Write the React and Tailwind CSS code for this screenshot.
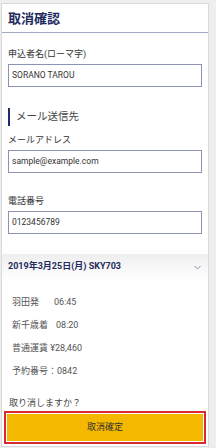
import React from 'react';

const font = "font-['Roboto','Noto_Sans_CJK_JP',sans-serif]";

const Field = ({ label, value, className = "" }) => (
  <div className={className}>
    <p className="text-[9px] leading-[12px] text-[#333333]">{label}</p>
    <div className="mt-[4px] h-[23px] border border-[#8d93b4] bg-white flex items-center px-[3px] text-[8.5px] text-[#333333]">
      {value}
    </div>
  </div>
);

const App = () => {
  return (
    <div className={`w-[216px] h-[448px] bg-[#eeeeee] pt-[3px] pl-[1px] pr-[7px] pb-[1px] ${font}`}>
      <div className="h-full bg-white border border-[#d9d9d9] flex flex-col">
        {/* Header */}
        <div className="h-[29px] flex items-center px-[6px] border-b border-[#a3a8c2]">
          <h1 className="text-[13px] font-bold text-[#1f2b5e] leading-none">取消確認</h1>
        </div>

        {/* Form */}
        <div className="px-[6px]">
          <Field className="mt-[15px]" label="申込者名(ローマ字)" value="SORANO TAROU" />

          <div className="mt-[21px] h-[18px] border-l-2 border-[#1f2b6e] pl-[6px] flex items-center">
            <span className="text-[10.5px] text-[#444444]">メール送信先</span>
          </div>

          <Field className="mt-[8px]" label="メールアドレス" value="sample@example.com" />
          <Field className="mt-[22px]" label="電話番号" value="0123456789" />
        </div>

        {/* Flight */}
        <div className="mt-[20px] h-[26px] flex items-center justify-between px-[6px] bg-gradient-to-b from-[#eeeeee] to-white">
          <span className="text-[9px] font-bold text-[#1f2b5e]">2019年3月25日(月) SKY703</span>
          <svg width="7" height="5" viewBox="0 0 7 5" className="mr-[1px]">
            <path d="M0.5 1 L3.5 4 L6.5 1" fill="none" stroke="#8a90b0" strokeWidth="1" />
          </svg>
        </div>

        <div className="px-[10px] pt-[16px] text-[9px] leading-[12px] text-[#555555] flex flex-col gap-[11px]">
          <p><span>羽田発</span><span className="ml-[15px]">06:45</span></p>
          <p><span>新千歳着</span><span className="ml-[8px]">08:20</span></p>
          <p>普通運賃 ¥28,460</p>
          <p>予約番号：0842</p>
        </div>

        {/* Confirm */}
        <div className="px-[2px] mt-auto pb-[2px]">
          <p className="pl-[5px] text-[9px] leading-[12px] text-[#444444]">取り消しますか？</p>
          <button className="mt-[2px] w-full h-[33px] border-2 border-[#d92a33] p-[1px] bg-white">
            <span className="h-full w-full flex items-center justify-center bg-[#f4b800] text-[9px] text-[#333333]">
              取消確定
            </span>
          </button>
        </div>
      </div>
    </div>
  );
};

export default App;
